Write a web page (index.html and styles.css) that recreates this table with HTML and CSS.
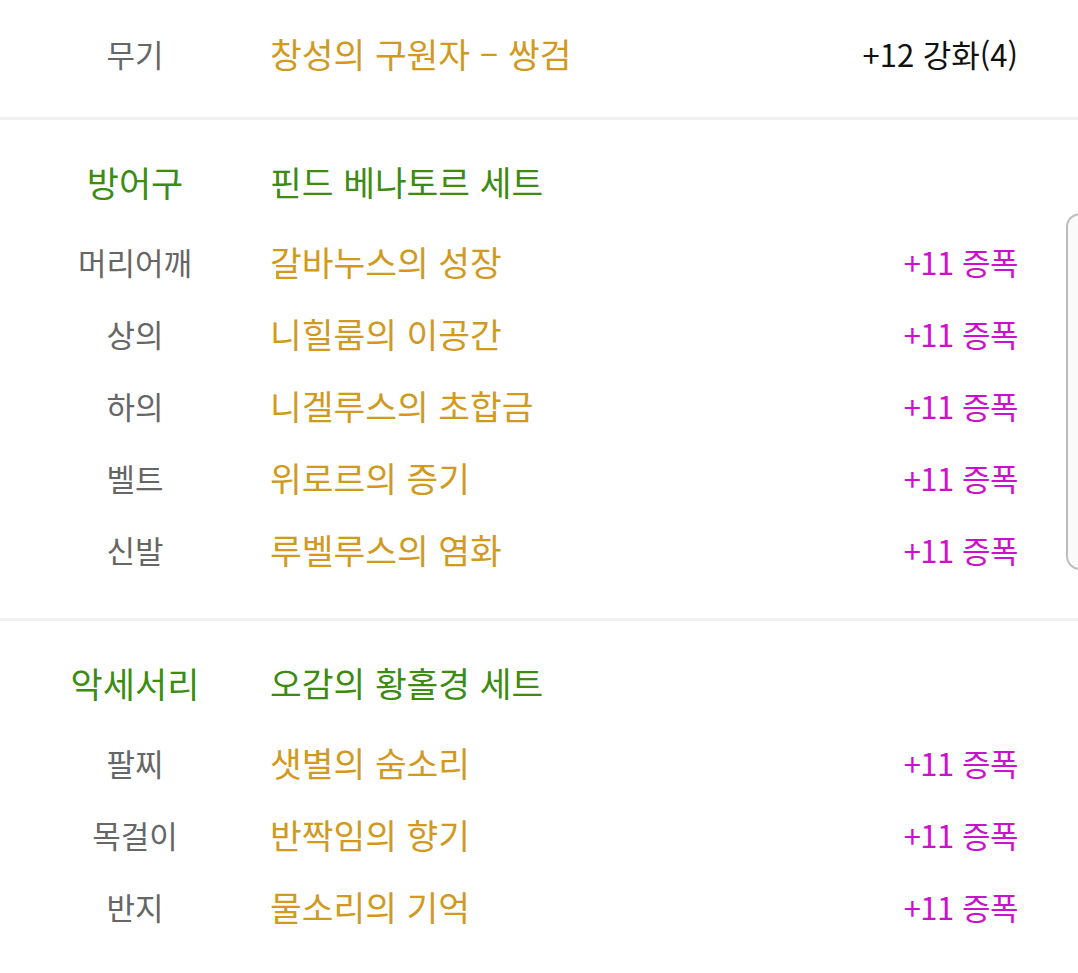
FILE: index.html
```html
<!DOCTYPE html>
<html lang="ko">
<head>
<meta charset="utf-8">
<link rel="stylesheet" href="styles.css">
</head>
<body>
<div class="page">
  <section class="sec sec-top">
    <div class="row">
      <span class="label">무기</span>
      <span class="name">창성의 구원자 – 쌍검</span>
      <span class="val val-black">+12 강화(4)</span>
    </div>
  </section>
  <section class="sec">
    <div class="row head">
      <span class="label green big">방어구</span>
      <span class="name green">핀드 베나토르 세트</span>
    </div>
    <div class="row"><span class="label">머리어깨</span><span class="name">갈바누스의 성장</span><span class="val">+11 증폭</span></div>
    <div class="row"><span class="label">상의</span><span class="name">니힐룸의 이공간</span><span class="val">+11 증폭</span></div>
    <div class="row"><span class="label">하의</span><span class="name">니겔루스의 초합금</span><span class="val">+11 증폭</span></div>
    <div class="row"><span class="label">벨트</span><span class="name">위로르의 증기</span><span class="val">+11 증폭</span></div>
    <div class="row"><span class="label">신발</span><span class="name">루벨루스의 염화</span><span class="val">+11 증폭</span></div>
  </section>
  <section class="sec sec-last">
    <div class="row head">
      <span class="label green big">악세서리</span>
      <span class="name green">오감의 황홀경 세트</span>
    </div>
    <div class="row"><span class="label">팔찌</span><span class="name">샛별의 숨소리</span><span class="val">+11 증폭</span></div>
    <div class="row"><span class="label">목걸이</span><span class="name">반짝임의 향기</span><span class="val">+11 증폭</span></div>
    <div class="row"><span class="label">반지</span><span class="name">물소리의 기억</span><span class="val">+11 증폭</span></div>
  </section>
  <div class="edge-tab"></div>
</div>
</body>
</html>
```
FILE: styles.css
```css
html, body {
  margin: 0;
  padding: 0;
  background: #ffffff;
}
body {
  font-family: "Noto Sans CJK KR", "Noto Sans", sans-serif;
  font-size: 31px;
  overflow: hidden;
}
.page {
  position: relative;
  width: 1078px;
  height: 973px;
  overflow: hidden;
}
.sec {
  border-bottom: 3px solid #f0f0f0;
  padding: 27px 0 31px;
}
.sec-top {
  padding: 19px 0 26px;
}
.sec-last {
  border-bottom: none;
}
.row {
  display: flex;
  align-items: center;
  height: 72px;
  box-sizing: border-box;
  padding: 0 60px 4px 70px;
}
.row.head {
  margin-bottom: 8px;
}
.label {
  width: 130px;
  text-align: center;
  color: #666666;
  flex-shrink: 0;
  margin-right: 70px;
  white-space: nowrap;
}
.label.big {
  font-size: 35px;
}
.name {
  flex: 1;
  color: #d19a1e;
  font-size: 34.5px;
  white-space: nowrap;
}
.val {
  color: #cc11cc;
  letter-spacing: -0.5px;
}
.val-black {
  color: #111111;
  letter-spacing: 0;
}
.green {
  color: #3c8c12;
}
.edge-tab {
  position: absolute;
  left: 1066px;
  top: 213px;
  width: 30px;
  height: 357px;
  box-sizing: border-box;
  border: 2px solid #bdbdbd;
  border-radius: 14px;
  background: #fafafa;
}
```
